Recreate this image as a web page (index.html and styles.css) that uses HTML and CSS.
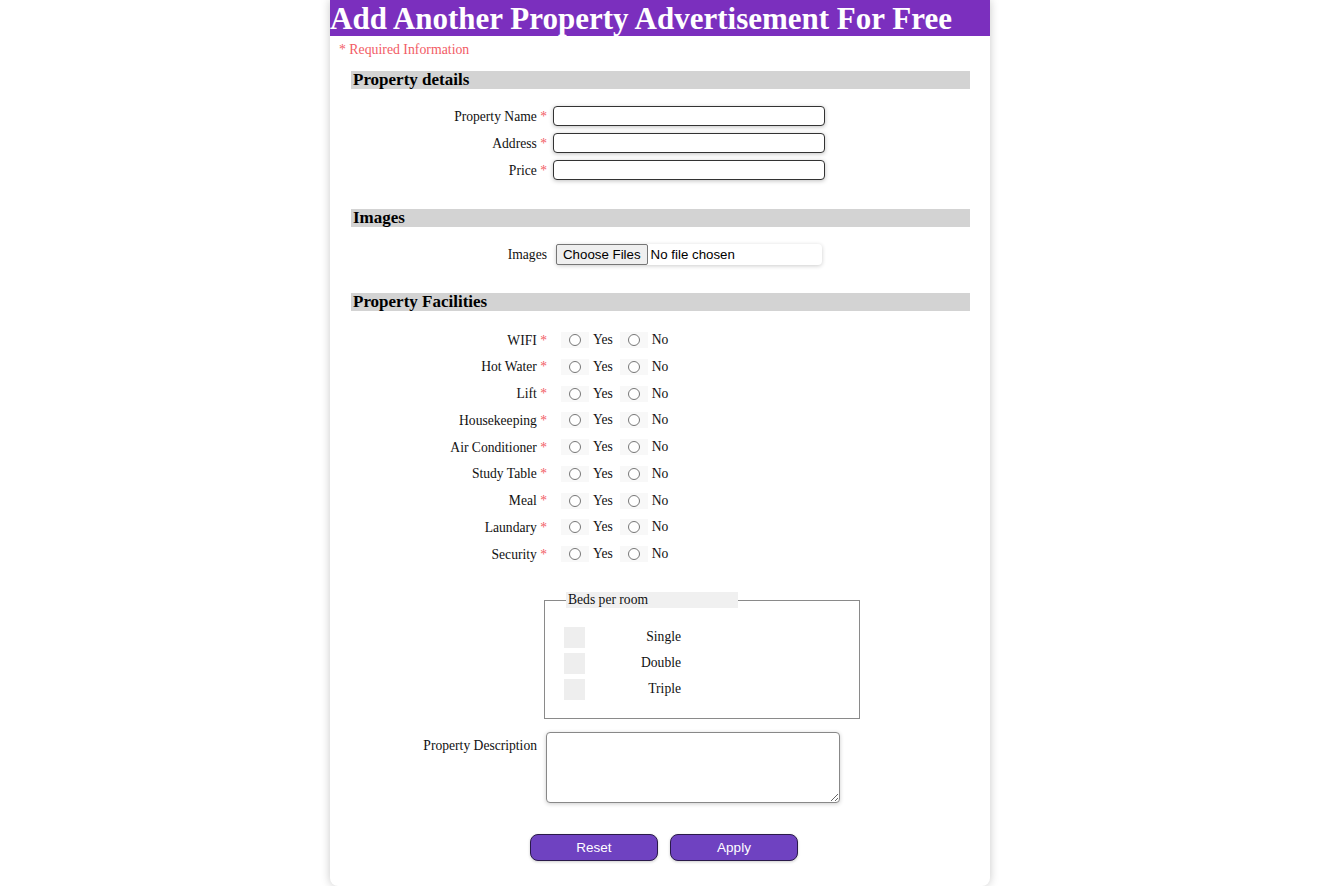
FILE: index.html
```html
<!DOCTYPE html>
<html lang="en">
  <head>
    <meta charset="UTF-8" />
    <title>Add Property</title>
    <link rel="stylesheet" href="styles.css">
  </head>
  <body>
    <div class="page">
      <h1>Add Another Property Advertisement For Free</h1>
      <p class="required">* Required Information</p>

      <form class="ad-form">
        <h3>Property details</h3>
        <div class="rows">
          <div class="row">
            <label>Property Name <span class="star">*</span></label>
            <input type="text" class="text-input" />
          </div>
          <div class="row">
            <label>Address <span class="star">*</span></label>
            <input type="text" class="text-input" />
          </div>
          <div class="row">
            <label>Price <span class="star">*</span></label>
            <input type="text" class="text-input" />
          </div>
        </div>

        <h3>Images</h3>
        <div class="rows">
          <div class="row">
            <label>Images</label>
            <div class="file-box">
              <span class="file-btn">Choose Files</span>
              <span class="file-text">No file chosen</span>
            </div>
          </div>
        </div>

        <h3>Property Facilities</h3>
        <div class="rows facilities">
          <div class="row">
            <label>WIFI <span class="star">*</span></label>
            <span class="radio-box"><input type="radio" name="wifi" /></span><span class="opt">Yes</span>
            <span class="radio-box"><input type="radio" name="wifi" /></span><span class="opt">No</span>
          </div>
          <div class="row">
            <label>Hot Water <span class="star">*</span></label>
            <span class="radio-box"><input type="radio" name="water" /></span><span class="opt">Yes</span>
            <span class="radio-box"><input type="radio" name="water" /></span><span class="opt">No</span>
          </div>
          <div class="row">
            <label>Lift <span class="star">*</span></label>
            <span class="radio-box"><input type="radio" name="lift" /></span><span class="opt">Yes</span>
            <span class="radio-box"><input type="radio" name="lift" /></span><span class="opt">No</span>
          </div>
          <div class="row">
            <label>Housekeeping <span class="star">*</span></label>
            <span class="radio-box"><input type="radio" name="house" /></span><span class="opt">Yes</span>
            <span class="radio-box"><input type="radio" name="house" /></span><span class="opt">No</span>
          </div>
          <div class="row">
            <label>Air Conditioner <span class="star">*</span></label>
            <span class="radio-box"><input type="radio" name="ac" /></span><span class="opt">Yes</span>
            <span class="radio-box"><input type="radio" name="ac" /></span><span class="opt">No</span>
          </div>
          <div class="row">
            <label>Study Table <span class="star">*</span></label>
            <span class="radio-box"><input type="radio" name="table" /></span><span class="opt">Yes</span>
            <span class="radio-box"><input type="radio" name="table" /></span><span class="opt">No</span>
          </div>
          <div class="row">
            <label>Meal <span class="star">*</span></label>
            <span class="radio-box"><input type="radio" name="meal" /></span><span class="opt">Yes</span>
            <span class="radio-box"><input type="radio" name="meal" /></span><span class="opt">No</span>
          </div>
          <div class="row">
            <label>Laundary <span class="star">*</span></label>
            <span class="radio-box"><input type="radio" name="laundry" /></span><span class="opt">Yes</span>
            <span class="radio-box"><input type="radio" name="laundry" /></span><span class="opt">No</span>
          </div>
          <div class="row">
            <label>Security <span class="star">*</span></label>
            <span class="radio-box"><input type="radio" name="security" /></span><span class="opt">Yes</span>
            <span class="radio-box"><input type="radio" name="security" /></span><span class="opt">No</span>
          </div>
        </div>

        <fieldset class="beds">
          <legend>Beds per room</legend>
          <div class="bed"><input type="checkbox" /><span>Single</span></div>
          <div class="bed"><input type="checkbox" /><span>Double</span></div>
          <div class="bed"><input type="checkbox" /><span>Triple</span></div>
        </fieldset>

        <div class="desc-row">
          <label>Property Description</label>
          <textarea></textarea>
        </div>

        <div class="actions">
          <button type="reset">Reset</button>
          <button type="button">Apply</button>
        </div>
      </form>
    </div>
  </body>
</html>
```

FILE: styles.css
```css
body {
  margin: 0;
  background: #fff;
  font-family: "Liberation Serif", "Times New Roman", serif;
  color: #111;
}

.page {
  width: 660px;
  min-height: 886px;
  margin: 0 auto;
  background: #fff;
  border-radius: 0 0 8px 8px;
  box-shadow: 0 0 10px rgba(0, 0, 0, 0.22);
  box-sizing: border-box;
}

h1 {
  margin: 0;
  height: 36px;
  line-height: 37px;
  background: #7b2fbe;
  color: #fff;
  font-size: 31px;
  font-weight: bold;
  white-space: nowrap;
  overflow: hidden;
}

.required {
  margin: 6px 0 0 9px;
  font-size: 13.8px;
  line-height: 15px;
  color: #f25c66;
}

.ad-form {
  margin: 0 20px 0 21px;
}

h3 {
  margin: 14px 0 0;
  height: 18px;
  line-height: 18px;
  padding-left: 2px;
  background: #d3d3d3;
  font-size: 17px;
  color: #000;
}

.rows {
  display: flex;
  flex-direction: column;
  gap: 7px;
  margin: 17px 0 29px;
}

.row {
  display: flex;
  align-items: center;
  height: 20px;
  font-size: 13.6px;
}

.row label {
  width: 196px;
  text-align: right;
  margin-right: 6px;
  padding-top: 1px;
}

.star {
  color: #f25c66;
}

.text-input {
  width: 272px;
  height: 20px;
  box-sizing: border-box;
  border: 1.5px solid #333;
  border-radius: 4px;
  box-shadow: 0 1px 4px rgba(0, 0, 0, 0.25);
  padding: 1px 4px;
}

.file-box {
  display: flex;
  align-items: center;
  width: 266px;
  height: 21px;
  margin-left: 3px;
  border-radius: 4px;
  background: #fff;
  box-shadow: 0 1px 4px rgba(0, 0, 0, 0.2);
  font-family: "Liberation Sans", Arial, sans-serif;
  font-size: 13.3px;
}

.file-btn {
  height: 19px;
  line-height: 19px;
  padding: 0 6px;
  margin-right: 3px;
  background: #efefef;
  border: 1px solid #767676;
  border-radius: 2px;
  color: #000;
}

.file-text {
  color: #000;
}

.facilities {
  gap: 8.75px;
  margin: 20px 0 0;
}

.facilities .row {
  height: 18px;
}

.radio-box {
  display: inline-flex;
  align-items: center;
  justify-content: center;
  width: 28px;
  height: 16px;
  margin-left: 8px;
  background: #f8f8f8;
}

.facilities .radio-box + .opt + .radio-box {
  margin-left: 7px;
}

.radio-box input {
  margin: 0;
  width: 12px;
  height: 12px;
}

.opt {
  margin-left: 4px;
}

.beds {
  width: 316px;
  box-sizing: border-box;
  margin: 29px 0 0 193px;
  padding: 13px 19px 19px;
  border: 1px solid #8a8a8a;
  font-size: 13.6px;
}

.beds legend {
  width: 172px;
  box-sizing: border-box;
  margin-left: 2px;
  padding: 0 2px;
  background: #f0f0f0;
  line-height: 16px;
}

.bed {
  display: flex;
  align-items: center;
  height: 20px;
  margin-top: 6px;
}

.bed input {
  appearance: none;
  margin: 0;
  width: 21px;
  height: 21px;
  background: #eee;
  border: none;
}

.bed span {
  width: 96px;
  text-align: right;
}

.desc-row {
  display: flex;
  align-items: flex-start;
  margin: 13px 0 0;
  font-size: 13.6px;
}

.desc-row label {
  width: 186px;
  text-align: right;
  margin: 6px 9px 0 0;
}

textarea {
  width: 294px;
  height: 71px;
  box-sizing: border-box;
  border: 1px solid #888;
  border-radius: 4px;
  box-shadow: 0 1px 4px rgba(0, 0, 0, 0.2);
}

.actions {
  display: flex;
  gap: 12px;
  margin: 31px 0 0 179px;
}

.actions button {
  width: 128px;
  height: 27px;
  background: #6f42c1;
  color: #fff;
  border: 1px solid #2a1a4a;
  border-radius: 8px;
  font-family: "Liberation Sans", Arial, sans-serif;
  font-size: 13.5px;
  cursor: pointer;
  box-shadow: 0 1px 3px rgba(0, 0, 0, 0.2);
}
```
